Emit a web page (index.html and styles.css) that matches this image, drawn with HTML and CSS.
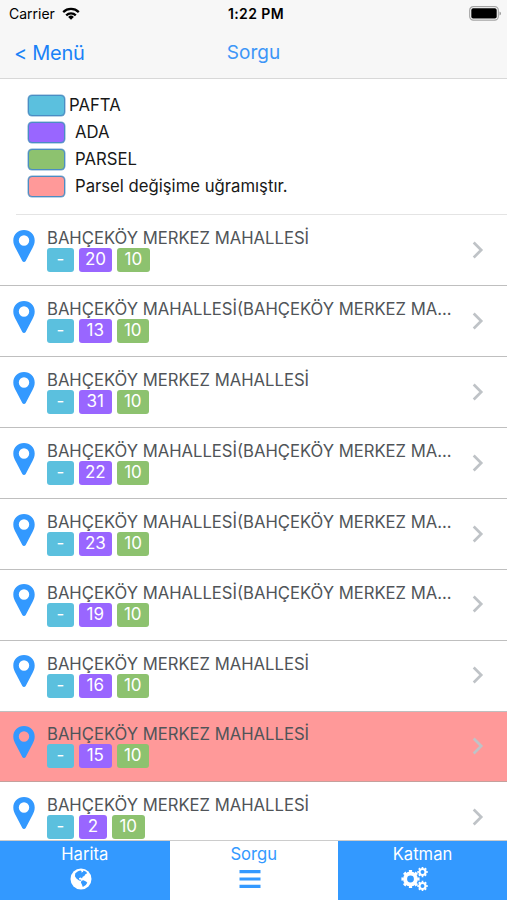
FILE: index.html
```html
<!DOCTYPE html>
<html lang="tr">
<head>
<meta charset="utf-8">
<title>Sorgu</title>
<link rel="stylesheet" href="styles.css">
</head>
<body>
<svg class="defs" width="0" height="0">
  <symbol id="pin" viewBox="0 0 22 32"><path fill-rule="evenodd" d="M11 0C4.9 0 .3 4.6.3 10.5c0 3.200 1 5 2.200 7.400L9.300 31c.7 1.300 2.700 1.300 3.400 0l6.800-13.100c1.200-2.400 2.200-4.200 2.200-7.400C21.700 4.600 17.100 0 11 0zm0 5.300a5.200 5.200 0 1 1 0 10.400a5.200 5.200 0 1 1 0-10.400z"/></symbol>
  <symbol id="chev" viewBox="0 0 12 18"><path d="M1.700 1.500L9.200 9l-7.500 7.500" fill="none" stroke="currentColor" stroke-width="2.700"/></symbol>
</svg>
<div class="app">
  <header class="top">
    <div class="status">
      <div class="carrier"><span>Carrier</span>
        <svg class="wifi" viewBox="0 0 18 13"><g fill="none" stroke="#000" stroke-width="2.300"><path d="M1.200 5.100a11.200 11.200 0 0 1 15.600 0"/><path d="M4.200 8.300a6.900 6.900 0 0 1 9.600 0"/></g><path d="M9 12.800L6.100 9.900a4.200 4.200 0 0 1 5.800 0z"/></svg>
      </div>
      <div class="clock">1:22 PM</div>
      <svg class="battery" viewBox="0 0 32 15"><rect x=".7" y=".7" width="28.600" height="13.400" rx="3.600" fill="#fff" stroke="#a5a5a5" stroke-width="1.200"/><rect x="2.300" y="2.300" width="25.400" height="10.200" rx="1.800"/><path d="M30.500 5.400q1.500.5 1.500 2t-1.500 2z" fill="#999"/></svg>
    </div>
    <nav class="nav"><a class="back">&lt; Menü</a><h1>Sorgu</h1><span></span></nav>
  </header>
  <main>
    <section class="legend">
      <div class="key"><i class="swatch pafta"></i><span class="near">PAFTA</span></div>
      <div class="key"><i class="swatch ada"></i><span>ADA</span></div>
      <div class="key"><i class="swatch parsel"></i><span>PARSEL</span></div>
      <div class="key"><i class="swatch changed"></i><span>Parsel değişime uğramıştır.</span></div>
    </section>
    <ul class="list">
      <li class="row"><svg class="pin"><use href="#pin"/></svg><div class="info"><div class="name">BAHÇEKÖY MERKEZ MAHALLESİ</div><div class="tags"><b class="pafta">-</b><b class="ada">20</b><b class="parsel">10</b></div></div><svg class="chev"><use href="#chev"/></svg></li>
      <li class="row"><svg class="pin"><use href="#pin"/></svg><div class="info"><div class="name">BAHÇEKÖY MAHALLESİ(BAHÇEKÖY MERKEZ MA...</div><div class="tags"><b class="pafta">-</b><b class="ada">13</b><b class="parsel">10</b></div></div><svg class="chev"><use href="#chev"/></svg></li>
      <li class="row"><svg class="pin"><use href="#pin"/></svg><div class="info"><div class="name">BAHÇEKÖY MERKEZ MAHALLESİ</div><div class="tags"><b class="pafta">-</b><b class="ada">31</b><b class="parsel">10</b></div></div><svg class="chev"><use href="#chev"/></svg></li>
      <li class="row"><svg class="pin"><use href="#pin"/></svg><div class="info"><div class="name">BAHÇEKÖY MAHALLESİ(BAHÇEKÖY MERKEZ MA...</div><div class="tags"><b class="pafta">-</b><b class="ada">22</b><b class="parsel">10</b></div></div><svg class="chev"><use href="#chev"/></svg></li>
      <li class="row"><svg class="pin"><use href="#pin"/></svg><div class="info"><div class="name">BAHÇEKÖY MAHALLESİ(BAHÇEKÖY MERKEZ MA...</div><div class="tags"><b class="pafta">-</b><b class="ada">23</b><b class="parsel">10</b></div></div><svg class="chev"><use href="#chev"/></svg></li>
      <li class="row"><svg class="pin"><use href="#pin"/></svg><div class="info"><div class="name">BAHÇEKÖY MAHALLESİ(BAHÇEKÖY MERKEZ MA...</div><div class="tags"><b class="pafta">-</b><b class="ada">19</b><b class="parsel">10</b></div></div><svg class="chev"><use href="#chev"/></svg></li>
      <li class="row"><svg class="pin"><use href="#pin"/></svg><div class="info"><div class="name">BAHÇEKÖY MERKEZ MAHALLESİ</div><div class="tags"><b class="pafta">-</b><b class="ada">16</b><b class="parsel">10</b></div></div><svg class="chev"><use href="#chev"/></svg></li>
      <li class="row changed"><svg class="pin"><use href="#pin"/></svg><div class="info"><div class="name">BAHÇEKÖY MERKEZ MAHALLESİ</div><div class="tags"><b class="pafta">-</b><b class="ada">15</b><b class="parsel">10</b></div></div><svg class="chev"><use href="#chev"/></svg></li>
      <li class="row"><svg class="pin"><use href="#pin"/></svg><div class="info"><div class="name">BAHÇEKÖY MERKEZ MAHALLESİ</div><div class="tags"><b class="pafta">-</b><b class="ada one">2</b><b class="parsel">10</b></div></div><svg class="chev"><use href="#chev"/></svg></li>
    </ul>
  </main>
  <footer class="tabs">
    <a class="tab harita"><span>Harita</span>
      <svg width="22" height="22" viewBox="0 0 22 22"><circle cx="11" cy="11" r="10.500" fill="#fff"/><path fill="#39f" d="M5.300 5.200L8 3.200l2.300-.7 1.400.8-.6 1.200 1.800-.5.6-1.400 2.600 1.200 1.100 1.500-1.800 1-1.100 1.700-1.600.8-.7 1.700-1.200-.9-1.700.3-.1 1.500 1.500.2.5 1.500-1.900-.5-2.700-2-1.500-2.300zM11.500 12.700l1.900-.4 2.600 1.200 1.300 1.300-1.500 2.300-3 2-.9-2.500-1-2z"/></svg>
    </a>
    <a class="tab active"><span>Sorgu</span>
      <svg width="22" height="22" viewBox="0 0 22 22"><path fill="#39f" d="M.5 2h21v3.200H.5zM.5 9.400h21v3.200H.5zM.5 16.700h21v3.200H.5z"/></svg>
    </a>
    <a class="tab katman"><span>Katman</span>
      <svg width="28" height="24" viewBox="0 0 28 24"><g fill="none" stroke="#fff"><circle cx="9.500" cy="12" r="5.400" stroke-width="4"/><circle cx="9.500" cy="12" r="7.900" stroke-width="2.400" pathLength="16" stroke-dasharray="1 1" stroke-dashoffset=".5"/><circle cx="21.500" cy="5" r="3" stroke-width="2.100"/><circle cx="21.500" cy="5" r="4.400" stroke-width="1.700" pathLength="16" stroke-dasharray="1 1" stroke-dashoffset=".5"/><circle cx="21.500" cy="19" r="3" stroke-width="2.100"/><circle cx="21.500" cy="19" r="4.400" stroke-width="1.700" pathLength="16" stroke-dasharray="1 1" stroke-dashoffset=".5"/></g></svg>
    </a>
  </footer>
</div>
</body>
</html>
```
FILE: styles.css
```css
* { box-sizing: border-box; }
body { margin: 0; font-family: Inter, "Liberation Sans", sans-serif; color: #000; }
.defs { display: block; }
.app { height: 900px; display: flex; flex-direction: column; overflow: hidden; background: #fff; }
.top { height: 79px; flex: none; background: #f7f7f7; border-bottom: 1px solid #d8d8d8; }
.status { height: 27px; display: grid; grid-template-columns: 1fr auto 1fr; align-items: center; padding: 0 6px 0 9px; font-size: 14px; }
.carrier { display: flex; align-items: center; gap: 7px; }
.wifi { width: 18px; height: 13px; }
.clock { font-weight: 600; font-size: 14px; letter-spacing: .4px; padding-left: 2px; }
.battery { width: 32px; height: 15px; justify-self: end; }
.nav { height: 51px; display: grid; grid-template-columns: 1fr auto 1fr; align-items: center; padding: 0 14px; color: #1a82f7; }
.back { font-size: 20px; letter-spacing: -.3px; }
.nav h1 { margin: 0; font-size: 19px; font-weight: 400; color: #3d96f7; }
main { flex: 1; min-height: 0; overflow: hidden; }
.legend { height: 136px; margin-left: 16px; padding: 13px 0 0 11px; border-bottom: 1px solid #e4e4e4; }
.key { height: 27px; display: flex; align-items: center; font-size: 16.700px; color: #181818; }
.key span { margin-top: -1px; }
.swatch { width: 37px; height: 21px; border: 1px solid #4a8dc4; box-shadow: 0 0 0 .5px #7aaad0; border-radius: 4px; margin: -1px 10px 0 1px; }
.key .near { margin-left: -6px; }
.pafta { background: #5bc0de; }
.ada { background: #96f; }
.parsel { background: #8dc26f; }
.changed { background: #f99; }
.list { list-style: none; margin: 0; padding: .6px 0 0; }
.row { height: 70.860px; display: flex; padding: 0 23px 0 13px; border-bottom: 1px solid #bfbfbf; }
.row.changed { border-bottom-color: #c4a09c; }
.pin { width: 22px; height: 32px; margin: 14.500px 12px 0 0; fill: #39f; flex: none; }
.info { width: 410px; padding-top: 12.800px; }
.name { height: 20px; line-height: 20px; font-size: 16.650px; color: #505458; white-space: nowrap; }
.tags { display: flex; gap: 5px; }
.tags b { height: 24px; line-height: 23px; min-width: 27px; padding: 0 6px; border-radius: 3px; text-align: center; font-size: 17px; font-weight: 400; color: #fff; }
.tags b + b { min-width: 32.500px; }
.tags b + .one { min-width: 28px; }
.chev { width: 12px; height: 18px; margin: 25.500px 0 0 auto; color: #bfc3c7; }
.tabs { height: 60px; flex: none; display: grid; grid-template-columns: 169.500px 168.500px 1fr; border-top: 1px solid #ccc; }
.tab { display: flex; flex-direction: column; align-items: center; background: #39f; color: #fff; font-size: 16.600px; line-height: 20px; padding-top: 2.500px; }
.tab svg { margin-top: 4.500px; position: relative; }
.tab.harita svg { left: -4px; }
.tab.active { background: #fff; color: #39f; }
.tab.active svg { left: -4px; }
.tab.katman svg { left: -8px; margin-top: 3.500px; }
```
